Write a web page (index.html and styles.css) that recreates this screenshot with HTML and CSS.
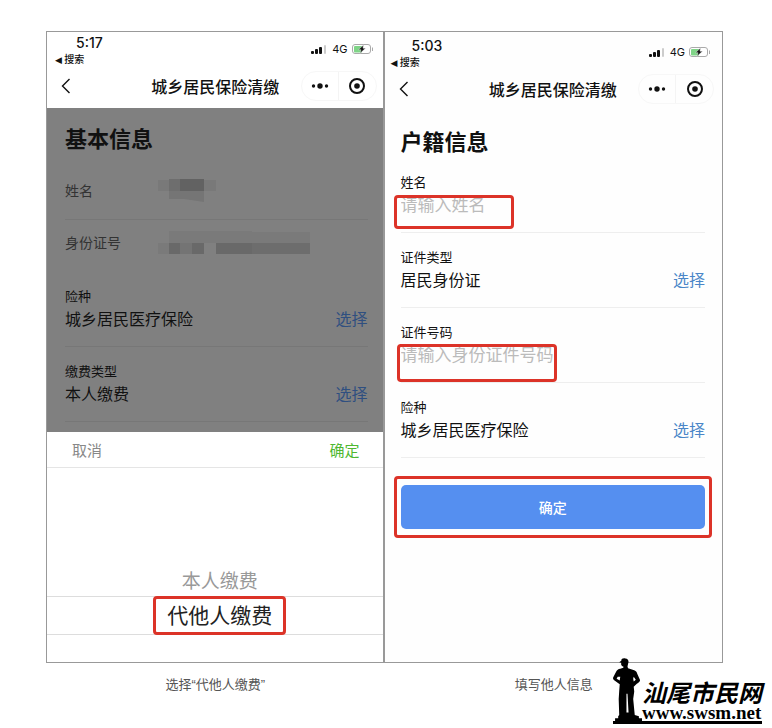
FILE: index.html
```
<!DOCTYPE html>
<html lang="zh-CN">
<head>
<meta charset="utf-8">
<meta name="viewport" content="width=device-width, initial-scale=1">
<title>城乡居民保险清缴</title>
<link rel="stylesheet" href="styles.css">
</head>
<body>
<svg class="defs" aria-hidden="true">
  <symbol id="signal" viewBox="0 0 17 11">
    <rect x="0" y="7" width="3" height="3" rx="1"/>
    <rect x="4" y="5" width="3" height="5" rx="1"/>
    <rect x="8" y="3" width="3" height="7" rx="1"/>
    <rect x="13" y="1" width="2" height="9" rx="1" fill="#ccc"/>
  </symbol>
  <symbol id="battery" viewBox="0 0 22 11">
    <rect x="0.5" y="0.5" width="18" height="9" rx="2.5" fill="#fff" stroke="#aaa"/>
    <path d="M3 2h7v6.500H3a1 1 0 0 1-1-1V3a1 1 0 0 1 1-1z" fill="#7fd487"/>
    <path d="M11.500 1 6.500 5.700H9L8 9.300l5.500-5.100H11z" fill="#111" stroke="#fff" stroke-width=".4"/>
    <path d="M20.500 3.500v3.500" stroke="#aaa" fill="none"/>
  </symbol>
  <symbol id="back" viewBox="0 0 10 16">
    <path d="M8.500 1 1.500 8l7 7" fill="none" stroke="#111" stroke-width="1.400"/>
  </symbol>
  <symbol id="more" viewBox="0 0 18 8">
    <circle cx="2.500" cy="4" r="1.700"/><circle cx="9" cy="4" r="2.700"/><circle cx="15.500" cy="4" r="1.700"/>
  </symbol>
  <symbol id="target" viewBox="0 0 18 18">
    <circle cx="9" cy="9" r="7" fill="none" stroke="#111" stroke-width="2"/><circle cx="9" cy="9" r="2.800"/>
  </symbol>
</svg>

<main class="guide">
  <figure class="step">
    <section class="phone phone-first">
      <header class="top">
        <div class="status">
          <div class="clock"><span class="time">5:17</span><a class="return" href="#search"><span class="arrow">◀</span> 搜索</a></div>
          <div class="radio"><svg class="signal"><use href="#signal"/></svg><span>4G</span><svg class="battery"><use href="#battery"/></svg></div>
        </div>
        <nav class="nav">
          <button class="icon-button back" aria-label="返回"><svg><use href="#back"/></svg></button>
          <h1 class="title">城乡居民保险清缴</h1>
          <div class="capsule">
            <button class="icon-button more" aria-label="更多"><svg><use href="#more"/></svg></button>
            <button class="icon-button target" aria-label="关闭"><svg><use href="#target"/></svg></button>
          </div>
        </nav>
      </header>
      <div class="form dimmed">
        <h2 class="heading">基本信息</h2>
        <div class="rows">
          <div class="row">
            <span class="row-label">姓名</span>
            <svg class="mosaic" viewBox="0 0 154 24" aria-hidden="true">
              <path fill="#797979" d="M0 1h11v11H0zM46 1h12v11H46z"/>
              <path fill="#6e6e6e" d="M11 0h11v12H11z"/>
              <path fill="#626262" d="M22 0h24v12H22z"/>
              <path fill="#757575" d="M11 12h35v11l-20-3H11z"/>
            </svg>
          </div>
          <div class="row">
            <span class="row-label">身份证号</span>
            <svg class="mosaic" viewBox="0 0 154 24" aria-hidden="true">
              <path fill="#7a7a7a" d="M11 0h83v12H11zM94 1h58v11H94zM0 12h11v11H0z"/>
              <path fill="#696969" d="M11 12h11v11H11zM34 12h12v11H34zM58 12h36v11H58z"/>
              <path fill="#747474" d="M22 12h12v11H22z"/>
              <path fill="#6d6d6d" d="M94 12h58v11H94z"/>
            </svg>
          </div>
        </div>
        <div class="field">
          <div class="label">险种</div>
          <div class="line"><span>城乡居民医疗保险</span><button class="choose">选择</button></div>
        </div>
        <div class="field">
          <div class="label">缴费类型</div>
          <div class="line"><span>本人缴费</span><button class="choose">选择</button></div>
        </div>
      </div>
      <div class="sheet">
        <div class="sheet-bar"><button class="cancel">取消</button><button class="confirm">确定</button></div>
        <div class="picker" role="listbox" aria-label="缴费类型">
          <button class="option" role="option" aria-selected="false">本人缴费</button>
          <button class="option selected" role="option" aria-selected="true"><span class="picked">代他人缴费</span></button>
        </div>
      </div>
    </section>
    <figcaption class="caption">选择“代他人缴费”</figcaption>
  </figure>

  <figure class="step">
    <section class="phone phone-second">
      <header class="top">
        <div class="status">
          <div class="clock"><span class="time">5:03</span><a class="return" href="#search"><span class="arrow">◀</span> 搜索</a></div>
          <div class="radio"><svg class="signal"><use href="#signal"/></svg><span>4G</span><svg class="battery"><use href="#battery"/></svg></div>
        </div>
        <nav class="nav">
          <button class="icon-button back" aria-label="返回"><svg><use href="#back"/></svg></button>
          <h1 class="title">城乡居民保险清缴</h1>
          <div class="capsule">
            <button class="icon-button more" aria-label="更多"><svg><use href="#more"/></svg></button>
            <button class="icon-button target" aria-label="关闭"><svg><use href="#target"/></svg></button>
          </div>
        </nav>
      </header>
      <form class="form">
        <h2 class="heading">户籍信息</h2>
        <div class="field">
          <label class="label" for="name">姓名</label>
          <input class="line" id="name" type="text" placeholder="请输入姓名">
          <span class="mark mark-name"></span>
        </div>
        <div class="field">
          <div class="label">证件类型</div>
          <div class="line"><span>居民身份证</span><button class="choose" type="button">选择</button></div>
        </div>
        <div class="field">
          <label class="label" for="number">证件号码</label>
          <input class="line" id="number" type="text" placeholder="请输入身份证件号码">
          <span class="mark mark-number"></span>
        </div>
        <div class="field">
          <div class="label">险种</div>
          <div class="line"><span>城乡居民医疗保险</span><button class="choose" type="button">选择</button></div>
        </div>
        <div class="submit-frame"><button class="submit" type="button">确定</button></div>
      </form>
    </section>
    <figcaption class="caption">填写他人信息</figcaption>
  </figure>

  <a class="site" href="#home">
    <svg class="statue" viewBox="0 0 28 67" preserveAspectRatio="none" aria-hidden="true">
      <path d="M6 4.500 8 3C8 .5 10 0 12 .5c2.500.2 3.500 2.500 2.700 5L14 9l.5 2 6 2c2 1 2.500 2 3 4l2.500 6c.5 2-1 3-3 4.500l-3 3 .5 5-1 8 1.500 17 4 1.500v2h3v5H2v-5h3v-2l1-1.500-.5-17L6 35l.5-7-5-4C-.2 22.500-.3 21.500.5 20L3 14.500C4 12.500 5 12 7 11.500l3-1V9C8 8.500 7.500 7 8 5z"/>
      <path fill="#fff" d="m4.500 20-1 2 3 2 .5-4zM20 20l2 3-2 2-.5-3zM13 38l1 0 1 20h-2z"/>
    </svg>
    <span class="site-text"><span class="site-name">汕尾市民网</span><span class="site-url">www.swsm.net</span></span>
  </a>
</main>
</body>
</html>
```
FILE: styles.css
```
* { box-sizing: border-box; }

body {
  margin: 0;
  background: #fff;
  color: #111;
  font-family: "Noto Sans CJK SC", sans-serif;
}

button, input {
  margin: 0;
  padding: 0;
  border: 0;
  background: none;
  color: inherit;
  font: inherit;
}

button { cursor: pointer; }
a { color: inherit; text-decoration: none; }
svg { display: block; fill: #111; }
.defs { display: none; }

.guide {
  position: relative;
  display: grid;
  grid-template-columns: 1fr 1fr;
  padding: 31px 49px 4px 46px;
}

.step {
  display: flex;
  flex-direction: column;
  margin: 0;
}

.phone {
  flex: 1;
  border: 1px solid #999;
}

.phone-first { border-right-width: 2px; }
.phone-second { border-left: 0; background: #fefefe; }

.caption {
  padding: 12px 0 29px;
  color: #555;
  font-family: "Liberation Sans", "Noto Sans CJK SC", sans-serif;
  font-size: 13px;
  line-height: 20px;
  text-align: center;
}

/* Status bar and navigation */
.phone-second .top { padding: 3px 2px 0 0; }

.status {
  display: flex;
  justify-content: space-between;
  height: 36px;
  padding: 3px 9px 0 8px;
}

.phone-second .status { padding-left: 6px; }

.clock { display: flex; flex-direction: column; }

.time {
  padding-left: 21px;
  font: 500 14px/16px Inter, sans-serif;
}

.return { font-size: 10px; font-weight: 500; line-height: 16px; }
.arrow { font-family: "DejaVu Sans", sans-serif; font-size: 9px; }

.radio {
  display: flex;
  align-items: center;
  gap: 4px;
  height: 28px;
  font: 11px/16px Inter, sans-serif;
}

.signal { width: 17px; height: 11px; }
.battery { width: 22px; height: 11px; }

.nav {
  display: grid;
  grid-template-columns: 76px 1fr 76px;
  align-items: center;
  height: 40px;
  padding: 0 6px 4px 7px;
}

.icon-button { display: grid; place-items: center; }
.back { width: 24px; height: 28px; }
.back svg { width: 10px; height: 16px; }

.title {
  margin: 0;
  font-size: 16px;
  font-weight: 500;
  line-height: 22px;
  text-align: center;
  white-space: nowrap;
}

.capsule {
  display: grid;
  grid-template-columns: 1fr 1fr;
  height: 30px;
  border: 1px solid #f7f7f7;
  border-radius: 15px;
}

.more { border-right: 1px solid #f4f4f4; }
.more svg { width: 18px; height: 8px; }
.target svg { width: 18px; height: 18px; }

/* Form */
.form { padding: 13px 17px 0 16px; }

.dimmed {
  padding: 13px 15px 10px 18px;
  background: #808080;
}

.heading {
  margin: 0 0 2px;
  font-size: 22px;
  font-weight: 700;
  line-height: 32px;
}

.rows { padding-top: 13px; }

.row {
  display: flex;
  height: 52px;
  padding-top: 11px;
  border-bottom: 1px solid #777;
}

.row:last-child { border-color: transparent; }

.row-label {
  width: 93px;
  color: #333;
  font-size: 14px;
  line-height: 22px;
}

.mosaic { width: 154px; height: 24px; }

.field {
  position: relative;
  height: 75px;
  padding-top: 14px;
  border-bottom: 1px solid #eee;
}

.dimmed .field { border-color: #777; }

.label {
  display: block;
  font-size: 13px;
  line-height: 20px;
}

.line {
  display: flex;
  justify-content: space-between;
  width: 100%;
  height: 24px;
  font-size: 16px;
  line-height: 24px;
}

input.line { font-size: 17px; }
input::placeholder { color: #bbb; opacity: 1; }
.choose { color: #4a86c8; }
.dimmed .choose { color: #2f4f80; }

.mark {
  position: absolute;
  border: 3px solid #dc3328;
  border-radius: 4px;
  pointer-events: none;
}

.mark-name { top: 37px; left: -7px; width: 120px; height: 34px; }
.mark-number { top: 36px; left: -4px; width: 160px; height: 38px; }

.submit-frame {
  margin: 18px -7px 0;
  padding: 6px 4px;
  border: 3px solid #dc3328;
  border-radius: 4px;
}

.submit {
  display: block;
  width: 100%;
  height: 44px;
  border-radius: 5px;
  background: #558ff0;
  color: #fff;
  font-size: 14px;
  font-weight: 500;
}

/* Bottom sheet */
.sheet-bar {
  display: flex;
  justify-content: space-between;
  height: 36px;
  padding: 0 23px 0 25px;
  border-bottom: 1px solid #e5e5e5;
  font-size: 15px;
}

.cancel { color: #888; }
.confirm { color: #4fb832; }

.picker {
  display: flex;
  flex-direction: column;
  padding: 96px 0 27px;
}

.option {
  height: 32px;
  padding-left: 10px;
  color: #999;
  font-size: 19px;
  line-height: 30px;
}

.selected {
  display: flex;
  justify-content: center;
  align-items: center;
  height: 39px;
  border-top: 1px solid #ddd;
  border-bottom: 1px solid #ddd;
  color: #222;
  font-size: 21px;
}

.picked {
  margin: -1px 0;
  padding: 0 11px 3px;
  border: 3px solid #dc3328;
  border-radius: 4px;
}

/* Site signature laid over the corner of the second screen */
.site {
  position: absolute;
  right: 10px;
  bottom: 4px;
  display: flex;
  align-items: flex-end;
  color: #000;
  border-bottom: 3px solid #000;
}

.statue { width: 29px; height: 63px; fill: #000; }

.site-text { display: flex; flex-direction: column; }

.site-name {
  font-size: 24px;
  font-style: italic;
  font-weight: 700;
  line-height: 26px;
}

.site-url {
  font: 700 19px/16px "Liberation Serif", serif;
}
```
